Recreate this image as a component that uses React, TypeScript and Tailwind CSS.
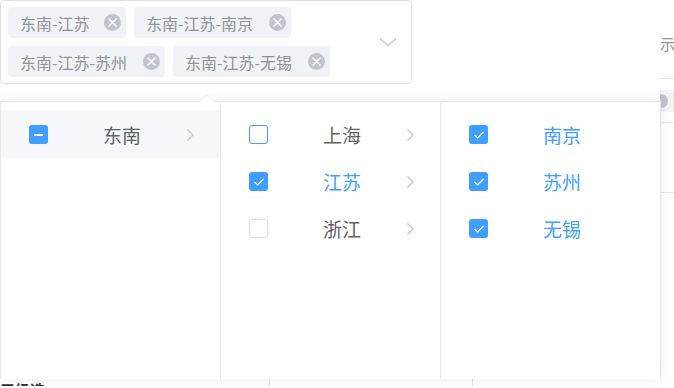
import React from "react";

const FONT = { fontFamily: '"Noto Sans CJK SC", "Noto Sans", sans-serif' };

function CloseIcon() {
  return (
    <span className="flex h-[17px] w-[17px] items-center justify-center rounded-full bg-[#c0c4cc]">
      <svg width="9" height="9" viewBox="0 0 9 9">
        <path d="M1 1 L8 8 M8 1 L1 8" stroke="#fff" strokeWidth="1.6" strokeLinecap="round" />
      </svg>
    </span>
  );
}

function Tag({ label, w }: { label: string; w: string }) {
  return (
    <div className={`flex h-[31px] items-center justify-between rounded-[4px] bg-[#f0f2f5] pl-[12px] pr-[5px] ${w}`}>
      <span className="text-[16px] leading-none text-[#909399]">{label}</span>
      <CloseIcon />
    </div>
  );
}

type State = "checked" | "indeterminate" | "empty" | "hover";

function Checkbox({ state }: { state: State }) {
  if (state === "checked") {
    return (
      <span className="flex h-[19px] w-[19px] items-center justify-center rounded-[3px] bg-[#409eff]">
        <svg width="12" height="10" viewBox="0 0 12 10">
          <path d="M1.5 5 L4.6 8 L10.5 2" fill="none" stroke="#fff" strokeWidth="1.2" />
        </svg>
      </span>
    );
  }
  if (state === "indeterminate") {
    return (
      <span className="flex h-[19px] w-[19px] items-center justify-center rounded-[3px] bg-[#409eff]">
        <span className="h-[2px] w-[9px] bg-white" />
      </span>
    );
  }
  return (
    <span
      className={`block h-[19px] w-[19px] rounded-[3px] border bg-white ${
        state === "hover" ? "border-[#409eff]" : "border-[#dcdfe6]"
      }`}
    />
  );
}

function Arrow() {
  return (
    <svg width="9" height="14" viewBox="0 0 9 14">
      <path d="M1.5 1.5 L7 7 L1.5 12.5" fill="none" stroke="#c0c4cc" strokeWidth="1.2" />
    </svg>
  );
}

function Row({
  label,
  state,
  active,
  arrow,
  highlight,
}: {
  label: string;
  state: State;
  active?: boolean;
  arrow?: boolean;
  highlight?: boolean;
}) {
  return (
    <div className={`flex h-[47px] items-center ${highlight ? "bg-[#f5f7fa]" : ""}`}>
      <div className="ml-[28px]">
        <Checkbox state={state} />
      </div>
      <span
        className={`ml-[55px] text-[19px] leading-none ${active ? "text-[#409eff]" : "text-[#606266]"}`}
      >
        {label}
      </span>
      <div className="flex-1" />
      {arrow && (
        <div className="mr-[25px] flex items-center">
          <Arrow />
        </div>
      )}
    </div>
  );
}

export default function App() {
  return (
    <div className="relative h-[388px] w-[674px] overflow-hidden bg-white" style={FONT}>
      {/* background page peeking on the right */}
      <div className="absolute left-[660px] top-0 h-[388px] w-[14px] overflow-hidden">
        <div className="mt-[36px] whitespace-nowrap text-[15px] leading-none text-[#909399]">示例</div>
        <div className="mt-[27px] h-px bg-[#e4e7ed]" />
        <div className="mt-[11px] flex h-[22px] items-center bg-[#f0f2f5]">
          <span className="ml-[-6px] h-[14px] w-[14px] rounded-full bg-[#c0c4cc]" />
        </div>
        <div className="mt-[10px] h-px bg-[#e4e7ed]" />
        <div className="mt-[69px] h-px bg-[#e4e7ed]" />
      </div>
      {/* background bits at bottom */}
      <div className="absolute left-0 top-[379px] flex h-[9px] w-[674px]">
        <div className="relative h-[7px] w-[68px] overflow-hidden">
          <span className="absolute left-0 top-[3px] whitespace-nowrap text-[15px] font-bold leading-none text-[#303133]">
            三级选
          </span>
        </div>
        <div className="ml-[201px] h-[7px] w-px bg-[#dcdfe6]" />
        <div className="ml-[202px] h-[7px] w-px bg-[#dcdfe6]" />
      </div>

      {/* select input */}
      <div className="relative z-10 flex h-[84px] w-[412px] rounded-[4px] border border-[#dcdfe6] bg-white">
        <div className="flex flex-col gap-[8px] pl-[7px] pt-[6px]">
          <div className="flex gap-[8px]">
            <Tag label="东南-江苏" w="w-[118px]" />
            <Tag label="东南-江苏-南京" w="w-[157px]" />
          </div>
          <div className="flex gap-[8px]">
            <Tag label="东南-江苏-苏州" w="w-[157px]" />
            <Tag label="东南-江苏-无锡" w="w-[157px]" />
          </div>
        </div>
        <div className="flex-1" />
        <div className="mr-[14px] flex items-center">
          <svg width="18" height="10" viewBox="0 0 18 10">
            <path d="M1 1.5 L9 8.5 L17 1.5" fill="none" stroke="#c0c4cc" strokeWidth="1.2" />
          </svg>
        </div>
      </div>

      {/* dropdown */}
      <div className="absolute left-0 top-[101px] z-20 flex h-[278px] w-[661px] border-x border-t border-[#e4e7ed] bg-white shadow-[0_0_12px_0_rgba(0,0,0,0.08)]">
        <div className="absolute left-[198px] top-[-8px] h-0 w-0 border-x-[8px] border-b-[8px] border-x-transparent border-b-[#e4e7ed]" />
        <div className="absolute left-[199px] top-[-7px] h-0 w-0 border-x-[7px] border-b-[7px] border-x-transparent border-b-white" />
        <div className="h-full w-[220px] border-r border-[#e4e7ed] pt-[9px]">
          <Row label="东南" state="indeterminate" arrow highlight />
        </div>
        <div className="h-full w-[220px] border-r border-[#e4e7ed] pt-[9px]">
          <Row label="上海" state="hover" arrow />
          <Row label="江苏" state="checked" active arrow />
          <Row label="浙江" state="empty" arrow />
        </div>
        <div className="h-full flex-1 pt-[9px]">
          <Row label="南京" state="checked" active />
          <Row label="苏州" state="checked" active />
          <Row label="无锡" state="checked" active />
        </div>
      </div>
    </div>
  );
}
